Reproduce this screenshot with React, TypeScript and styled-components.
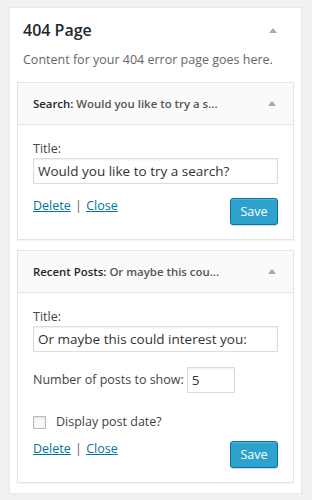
import styled, { createGlobalStyle } from "styled-components";

const GlobalStyle = createGlobalStyle`
    html, body {
        margin: 0;
        padding: 0;
        background: #f1f1f1;
    }
    body {
        font-family: "Open Sans", "Noto Sans", "Liberation Sans", sans-serif;
        font-size: 12.5px;
        color: #444;
    }
`
const Panel = styled.div`
    box-sizing: border-box;
    width: 293px;
    margin: 7px 0 0 9px;
    padding: 0 7px 10px;
    background: #fff;
    border: 1px solid #e8e8e8;
    box-shadow: 0 1px 1px rgba(0, 0, 0, 0.04);
`
const PanelHead = styled.div`
    display: flex;
    align-items: center;
    justify-content: space-between;
    padding: 11px 17px 0 6px;
    height: 22px;
`
const PanelTitle = styled.h2`
    margin: 0;
    font-size: 16px;
    font-weight: 600;
    color: #23282d;
    line-height: 22px;
`
const Arrow = styled.span`
    width: 0;
    height: 0;
    border-left: 4px solid transparent;
    border-right: 4px solid transparent;
    border-bottom: 5px solid #aaa;
`
const Description = styled.p`
    margin: 10px 0 13px 6px;
    line-height: 18px;
    color: #666;
    font-size: 12.5px;
`
const Widget = styled.div`
    border: 1px solid #e5e5e5;
    background: #fff;
    box-shadow: 0 1px 1px rgba(0, 0, 0, 0.04);
    & + & {
        margin-top: 10px;
    }
`
const WidgetHead = styled.div`
    box-sizing: border-box;
    height: 42px;
    display: flex;
    align-items: center;
    justify-content: space-between;
    padding: 0 17px 0 15px;
    background: #fafafa;
    border-bottom: 1px solid #e5e5e5;
    font-weight: 600;
    font-size: 11.4px;
    color: #23282d;
`
const InTitle = styled.span`
    color: #555;
`
const WidgetBody = styled.div`
    padding: 15px 15px 14px;
`
const Label = styled.label`
    display: block;
    line-height: 18px;
    color: #444;
`
const TextInput = styled.input`
    box-sizing: border-box;
    width: 100%;
    height: 26px;
    margin: 0;
    padding: 0 4px;
    border: 1px solid #ddd;
    box-shadow: inset 0 1px 2px rgba(0, 0, 0, 0.07);
    font-family: inherit;
    font-size: 13.5px;
    color: #333;
    outline: none;
`
const Row = styled.div<{ $gap?: number }>`
    display: flex;
    align-items: center;
    margin-top: ${(p) => p.$gap ?? 14}px;
    gap: 3px;
    line-height: 18px;
`
const NumInput = styled(TextInput)`
    width: 48px;
`
const Check = styled.span`
    box-sizing: border-box;
    width: 13px;
    height: 13px;
    margin-right: 7px;
    border: 1px solid #bbb;
    background: #f8f8f8;
    box-shadow: inset 0 1px 2px rgba(0, 0, 0, 0.1);
`
const Footer = styled.div<{ $gap: number }>`
    display: flex;
    justify-content: space-between;
    align-items: flex-start;
    margin-top: ${(p) => p.$gap}px;
`
const Links = styled.div`
    line-height: 16px;
    color: #666;
    word-spacing: 1px;
    a {
        color: #0074a2;
        text-decoration: underline;
        word-spacing: 0;
    }
`
const SaveButton = styled.button`
    box-sizing: border-box;
    height: 27px;
    width: 48px;
    padding: 0;
    border: 1px solid #0074a2;
    border-radius: 3px;
    background: #2ea2cc;
    box-shadow: inset 0 1px 0 rgba(120, 200, 230, 0.5), 0 1px 0 rgba(0, 0, 0, 0.15);
    color: #fff;
    font-family: inherit;
    font-size: 12.5px;
`

const WidgetActions = ({ gap }: { gap: number }) => (
    <Footer $gap={gap}>
        <Links>
            <a href="#">Delete</a> | <a href="#">Close</a>
        </Links>
        <SaveButton>Save</SaveButton>
    </Footer>
)

const App = () => {
    return (
        <>
            <GlobalStyle />
            <Panel>
                <PanelHead>
                    <PanelTitle>404 Page</PanelTitle>
                    <Arrow />
                </PanelHead>
                <Description>Content for your 404 error page goes here.</Description>

                <Widget>
                    <WidgetHead>
                        <span>Search: <InTitle>Would you like to try a s...</InTitle></span>
                        <Arrow />
                    </WidgetHead>
                    <WidgetBody>
                        <Label>Title:</Label>
                        <TextInput defaultValue="Would you like to try a search?" />
                        <WidgetActions gap={14} />
                    </WidgetBody>
                </Widget>

                <Widget>
                    <WidgetHead>
                        <span>Recent Posts: <InTitle>Or maybe this cou...</InTitle></span>
                        <Arrow />
                    </WidgetHead>
                    <WidgetBody>
                        <Label>Title:</Label>
                        <TextInput defaultValue="Or maybe this could interest you:" />
                        <Row $gap={15}>
                            <span>Number of posts to show:</span>
                            <NumInput defaultValue="5" />
                        </Row>
                        <Row $gap={20}>
                            <Check />
                            <span>Display post date?</span>
                        </Row>
                        <WidgetActions gap={10} />
                    </WidgetBody>
                </Widget>
            </Panel>
        </>
    );
};
export default App;
